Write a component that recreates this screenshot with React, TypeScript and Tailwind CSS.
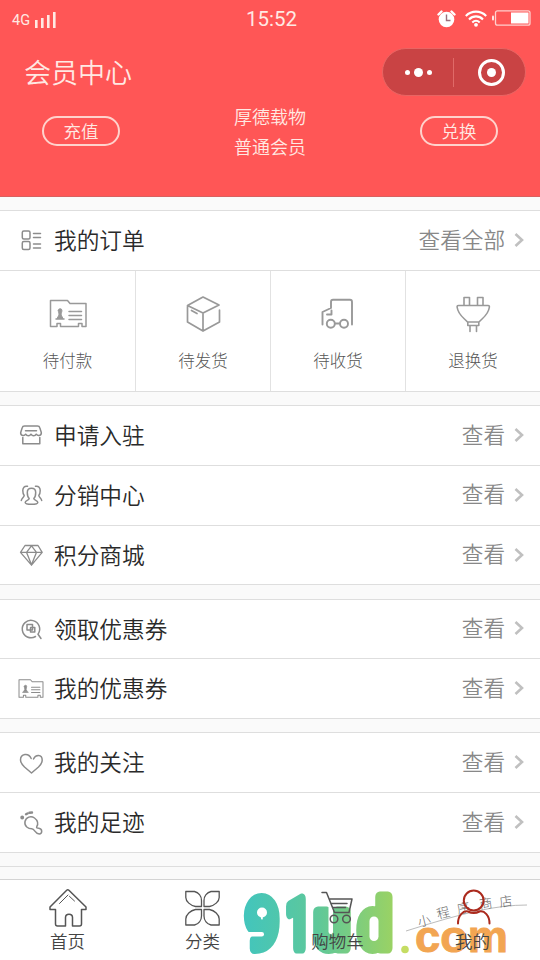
import type { ReactNode } from "react";

type RowItem = {
  icon: ReactNode;
  label: string;
};

function Svg({ className, box, children }: { className: string; box: string; children: ReactNode }) {
  return (
    <svg
      className={className}
      viewBox={box}
      fill="none"
      stroke="currentColor"
      strokeWidth="1.5"
      strokeLinecap="round"
      strokeLinejoin="round"
    >
      {children}
    </svg>
  );
}

const small = "w-[26px] h-[26px] text-[#8c8c8c]";
const large = "w-[40px] h-[40px] text-[#999]";

const OrderIcon = () => (
  <Svg className={small} box="0 0 26 26">
    <rect x="4.300" y="4" width="7.700" height="8" rx="1.500" />
    <rect x="4.300" y="14.500" width="7.700" height="8" rx="1.500" />
    <path d="M15.500 6.500h7M15.500 10.500h7M15.500 17h7M15.500 21h7" />
  </Svg>
);

const ShopIcon = () => (
  <Svg className={small} box="0 0 26 26">
    <path d="M6.500 4h13c1.500 0 2 .6 2.300 1.800l1.500 4.700c.4 3-3.300 4.200-5 1.700-1.300 2.200-4 2.200-5.300 0-1.300 2.200-4 2.200-5.300 0-1.700 2.500-5.400 1.300-5-1.700l1.500-4.700C4.500 4.600 5 4 6.500 4zM7.500 8.800h11M4.800 15.500v6.300h17v-6.300" />
  </Svg>
);

const PeopleIcon = () => (
  <Svg className={small} box="0 0 26 26">
    <path d="M11.200 16.500C9.500 15 9.300 13 9.300 10.500c0-2.500 1.700-4.200 4.200-4.200s4.200 1.700 4.200 4.200c0 2.500-.2 4.500-1.900 6 0 2 4 1.800 4 4 0 1.500-2.500 1.800-6.300 1.800s-6.300-.3-6.300-1.800c0-2.200 4-2 4-4z" />
    <path d="M9.500 4.300C6.200 3.700 4.800 6 4.800 8.500c0 2 .3 3.700 1.400 5C6 15.500 3.500 16 3.300 18.500M17.500 4.300c3.300-.6 4.700 1.700 4.700 4.200 0 2-.3 3.700-1.400 5 .2 2 2.700 2.500 2.900 5" />
  </Svg>
);

const DiamondIcon = () => (
  <Svg className={small} box="0 0 26 26">
    <path d="M7 3.500h13l4.200 6.800-10.700 12.900L2.500 10.300zM2.700 10.300H24M8.500 10.300l5 12.500 5-12.500-5-6.500z" strokeWidth="1.300" />
  </Svg>
);

const SearchIcon = () => (
  <Svg className={small} box="0 0 26 26">
    <path d="M17.500 20.500A8.700 8.700 0 1 1 20 18.200l3 4.300" />
    <path d="M9 8.500h5.500v5.500H9zM12.500 11.500h4.300V16h-4.300v-4" />
  </Svg>
);

const cardPaths = (
  <>
    <path d="M6.500 32.500h-4V6.500h17l2.500 3h16v23h-4v-3h-3.500v3h-18v-3H9v3H6" />
    <path d="M21 17.500h12.500M21 21.500h12.500M21 25.500h12.500M8 25h8" />
    <path d="M10.300 16.500a1.800 1.800 0 0 1 3.600 0c0 1.800-.8 2.500-.8 4.500l1.900 3.500H9l2-3.500c0-2-.7-2.700-.7-4.500z" fill="currentColor" strokeWidth="1" />
  </>
);

const CouponIcon = () => (
  <Svg className={small} box="1 1 38.500 38.500">{cardPaths}</Svg>
);

const HeartIcon = () => (
  <Svg className={small} box="0 0 26 26">
    <path d="M15.500 9C17.500 4.500 24.200 4 24.200 10.300c0 2.700-1.700 4.700-3.700 6.700l-7 6-7-6c-2-2-4-4-4-7C2.500 3.500 10.500 2.500 13.200 8.500" />
  </Svg>
);

const FootIcon = () => (
  <Svg className={small} box="0 0 26 26">
    <path d="M7 11.500c1-4.500 6-6 9.500-3.500 3.300 2.300 4 6 2.300 8.500-.7 1.500.4 1.800 2 1.800 4 .5 3.600 5.700.4 5.700-4.500 0-4-5-7.500-5.200C10.500 18.800 6 16.500 7 11.500z" />
    <path d="M8 4.300l1.500-.8M11.500 2.700l2.500-.2" strokeWidth="2.400" />
    <circle cx="4.200" cy="7.500" r="1.200" fill="currentColor" />
  </Svg>
);

const PayIcon = () => (
  <Svg className={large} box="0 0 40 40">{cardPaths}</Svg>
);

const BoxIcon = () => (
  <Svg className={large} box="0 0 40 40">
    <path d="M20 3l16 8L20 19 4.500 11.500zM4.500 11.500V28L20 37V19M36.500 16v12L20 37M8.500 16.500l5.500 3" strokeWidth="1.700" />
  </Svg>
);

const TruckIcon = () => (
  <Svg className={large} box="0 0 40 40">
    <path d="M4.500 30.500V18l8.500-4V8c0-1.500.5-2.300 2-2.300h17c1.500 0 2 .8 2 2.300v22.500M13.500 16.500v4H9M17 29.500h5" strokeWidth="1.900" />
    <circle cx="12.800" cy="29.700" r="4" strokeWidth="1.900" />
    <circle cx="26" cy="29.700" r="4" strokeWidth="1.900" />
  </Svg>
);

const PlugIcon = () => (
  <Svg className={large} box="0 0 40 40">
    <path d="M11 11V3.500h5.500V11M24.500 11V3.500H30V11M5.500 11.500H35c1.500 0 1.500.8 1.300 2C35.300 21 29.500 24 26 28H14.500C11 24 5.200 21 4.200 13.500c-.2-1.200-.2-2 1.300-2zM14.800 28v3.500h11V28M17 32v5.500M23.500 32v5.500" strokeWidth="1.600" />
  </Svg>
);

function Chevron() {
  return (
    <svg className="w-[10px] h-[14px] ml-[9px] mb-[1px]" viewBox="0 0 10 14" fill="none" stroke="#c0c0c0" strokeWidth="2.600">
      <path d="M1.500 1l6.500 6-6.500 6" />
    </svg>
  );
}

function Row({ icon, label, action = "查看" }: RowItem & { action?: string }) {
  return (
    <div className="flex h-[59.85px] items-center border-t border-[#dedede] pl-[18px] pr-[16px]">
      {icon}
      <span className="ml-[10px] text-[22.7px] leading-none text-[#2a2a2a]">{label}</span>
      <span className="mb-[4px] ml-auto text-[21.600px] leading-none text-[#888]">{action}</span>
      <Chevron />
    </div>
  );
}

function Section({ rows }: { rows: RowItem[] }) {
  return (
    <section className="mt-[13.100px] border-b border-[#dedede] bg-white">
      {rows.map((row) => (
        <Row key={row.label} {...row} />
      ))}
    </section>
  );
}

function StatusBar() {
  return (
    <div className="flex h-[38px] items-center pl-[12px] pr-[9px]">
      <div className="flex flex-1 items-center gap-[5px] pt-[2px]">
        <span className="pt-[3px] font-['Roboto'] text-[14.500px] leading-none">4G</span>
        <svg className="h-[16px] w-[22px]" viewBox="0 0 22 16" fill="currentColor">
          <rect x="0" y="8" width="2.600" height="8" />
          <rect x="6" y="6" width="2.600" height="10" />
          <rect x="12" y="3" width="2.600" height="13" />
          <rect x="18" y="0" width="2.600" height="16" />
        </svg>
      </div>
      <span className="pt-[1px] font-['Roboto'] text-[20.500px] leading-none">15:52</span>
      <div className="flex flex-1 items-center justify-end">
        <svg className="h-[18px] w-[19px]" viewBox="0 0 19 18">
          <circle cx="9.500" cy="9.500" r="7.800" fill="white" />
          <path d="M1.500 4.500l3-3M17.500 4.500l-3-3" stroke="white" strokeWidth="2.400" strokeLinecap="round" />
          <path d="M9.500 4.500v6h4" stroke="#9c6f7c" strokeWidth="1.400" fill="none" />
        </svg>
        <svg className="ml-[9px] mb-[2px] h-[17px] w-[22px]" viewBox="0 0 22 17" fill="none" stroke="white" strokeWidth="2.100">
          <path d="M.8 6C6.500.2 15.500.2 21.200 6M4 9.400c4-4 10-4 14 0M7.300 12.500c2.200-2.100 5.200-2.100 7.400 0" />
          <circle cx="11" cy="14.800" r="1.900" fill="white" stroke="none" />
        </svg>
        <svg className="ml-[5px] mb-[2px] h-[16px] w-[39px]" viewBox="0 0 39 16">
          <rect x="3.500" y=".8" width="34.500" height="14.400" rx="2" fill="none" stroke="#ffd0cd" strokeWidth="1.300" />
          <rect x="0" y="5.500" width="2" height="5" rx="1" fill="#ffe6e4" />
          <rect x="19" y="2.500" width="17.500" height="11" fill="white" />
        </svg>
      </div>
    </div>
  );
}

function Header() {
  return (
    <header className="h-[197px] border-b border-[#d9605f] bg-[#ff5656] font-normal text-[#ffe9e3]">
      <StatusBar />
      <div className="flex h-[68px] items-center justify-between pl-[24px] pr-[14px]">
        <h1 className="mb-[2px] text-[27px] font-[350] leading-none">会员中心</h1>
        <div className="flex h-[48px] w-[144px] items-center rounded-full border border-[#e96563] bg-[#c94344]">
          <div className="flex w-[70px] items-center justify-center gap-[4px]">
            <i className="size-[5px] rounded-full bg-white" />
            <i className="size-[9px] rounded-full bg-white" />
            <i className="size-[5px] rounded-full bg-white" />
          </div>
          <div className="h-[29px] w-px bg-[#e06a68]" />
          <div className="flex flex-1 justify-center pl-[4px]">
            <div className="flex size-[27px] items-center justify-center rounded-full border-[3px] border-white">
              <i className="size-[9px] rounded-full bg-white" />
            </div>
          </div>
        </div>
      </div>
      <div className="flex items-start justify-between px-[42px] font-[350]">
        <button className="mt-[10px] h-[30px] w-[78px] rounded-full border-2 border-[#ffd2cc] pb-[1px] text-[17.500px] leading-none">充值</button>
        <div className="-mt-[5px] text-center text-[18px] leading-[30px]">
          <p>厚德载物</p>
          <p>普通会员</p>
        </div>
        <button className="mt-[10px] h-[30px] w-[78px] rounded-full border-2 border-[#ffd2cc] pb-[1px] text-[17.500px] leading-none">兑换</button>
      </div>
    </header>
  );
}

const orders: RowItem[] = [
  { icon: <PayIcon />, label: "待付款" },
  { icon: <BoxIcon />, label: "待发货" },
  { icon: <TruckIcon />, label: "待收货" },
  { icon: <PlugIcon />, label: "退换货" },
];

const tabs: RowItem[] = [
  {
    label: "首页",
    icon: (
      <Svg className="h-[40px] w-[40px] text-[#555]" box="0 0 40 40">
        <path d="M18.700 3.300c.8-.8 1.400-.8 2.200 0L38 20v2.500h-4.500V37c0 1.500-.5 2-2 2h-7V30.500c0-4.500-7-4.500-7 0V39h-8c-1.500 0-2-.5-2-2V22.500H2V20z" />
        <path d="M11.500 16.500L20 8l6.500 6" strokeWidth="1" strokeDasharray="12 2 10 3" />
      </Svg>
    ),
  },
  {
    label: "分类",
    icon: (
      <Svg className="h-[40px] w-[40px] text-[#555]" box="0 0 40 40">
        <path d="M2.800 4.500h8.700c4 1 7 4.500 7 9v6h-6c-5-1-9.700-5-9.700-9zM36.200 4.500H28c-4 1-7 4.500-7 9v6h5.500c5-1 9.700-5 9.700-9zM2.800 38h8.700c4-1 7-4.500 7-9v-6.500h-6c-5 1-9.700 5-9.700 9.500zM36.200 38H28c-4-1-7-4.500-7-9v-6.500h5.500c5 1 9.700 5 9.700 9.500z" strokeWidth="1.300" />
      </Svg>
    ),
  },
  {
    label: "购物车",
    icon: (
      <Svg className="h-[40px] w-[40px] text-[#555]" box="0 0 40 40">
        <path d="M4 5.500h4.500l8 20h14.500l3-13.500H12M13 16.500h16M15 20.500h12.500" />
        <circle cx="16" cy="32" r="3.800" />
        <circle cx="28.500" cy="32" r="3.800" />
      </Svg>
    ),
  },
  {
    label: "我的",
    icon: (
      <Svg className="h-[40px] w-[40px] text-[#ab2a1d]" box="0 0 40 40">
        <circle cx="20.700" cy="13.500" r="9.900" strokeWidth="2" />
        <path d="M5 36.500c0-8 5-13 10-12 3.500 1.800 8 1.800 11.500 0 5-1 10 4 10 12" strokeWidth="2" />
      </Svg>
    ),
  },
];

// Site badge that floats over the tab bar
function Badge() {
  return (
    <svg className="pointer-events-none absolute left-[230px] top-[-1px] h-[81px] w-[310px]" viewBox="230 879 310 81">
      <defs>
        <linearGradient id="badge" gradientUnits="userSpaceOnUse" x1="243" y1="0" x2="393" y2="0">
          <stop offset="0" stopColor="#42c5bd" />
          <stop offset="0.500" stopColor="#5fc899" />
          <stop offset="1" stopColor="#9ad264" />
        </linearGradient>
      </defs>
      <g fill="url(#badge)" stroke="url(#badge)" strokeWidth="11" strokeLinejoin="round" fontFamily="Roboto" fontWeight="700" fontSize="68">
        <text x="246" y="947.500" textLength="32" lengthAdjust="spacingAndGlyphs">9</text>
        <text x="286" y="947.500" textLength="24" lengthAdjust="spacingAndGlyphs">1</text>
        <text x="315" y="947.500" textLength="34" lengthAdjust="spacingAndGlyphs">u</text>
        <text x="359" y="947.500" textLength="32" lengthAdjust="spacingAndGlyphs">d</text>
      </g>
      {/* counters of the chunky letters */}
      <g fill="white">
        <circle cx="262" cy="912.500" r="5" />
        <rect x="240" y="932" width="24" height="4.500" rx="2.200" />
        <rect x="328.500" y="904" width="4.500" height="30" rx="2.200" />
        <rect x="369.500" y="916.500" width="9" height="24.500" rx="4.500" />
      </g>
      <circle cx="405" cy="949.500" r="3.800" fill="#c5dd63" />
      <text x="415" y="952" fill="#f2a552" stroke="#f2a552" strokeWidth="1" fontFamily="Liberation Sans" fontWeight="700" fontSize="45" textLength="93" lengthAdjust="spacingAndGlyphs">com</text>
      <path d="M406 931Q450 917 477 911T527 905" stroke="#aaa" strokeWidth="0.800" fill="none" />
      <g fill="#666" fontFamily="Noto Sans CJK SC" fontWeight="300" fontSize="13">
        <text transform="translate(419 927) rotate(-14)">小</text>
        <text transform="translate(438 919) rotate(-14)">程</text>
        <text transform="translate(458 914) rotate(-12)">序</text>
        <text transform="translate(480 909) rotate(-8)">商</text>
        <text transform="translate(500 907) rotate(-8)">店</text>
      </g>
    </svg>
  );
}

function TabBar() {
  return (
    <nav className="relative mt-[11.500px] h-[82px] border-t border-[#d4d4d4] bg-white">
      <Badge />
      <div className="relative grid grid-cols-4">
        {tabs.map((tab) => (
          <div key={tab.label} className="flex flex-col items-center pt-[7px] text-[17.500px] text-[#444]">
            {tab.icon}
            <span className="mt-[5px] leading-none">{tab.label}</span>
          </div>
        ))}
      </div>
    </nav>
  );
}

function App() {
  return (
    <div className="h-[960px] w-[540px] overflow-hidden bg-[#fafafa] font-['Noto_Sans_CJK_SC',sans-serif] font-[350]">
      <Header />
      <section className="mt-[13px] border-b border-[#dedede] bg-white">
        <Row icon={<OrderIcon />} label="我的订单" action="查看全部" />
        <div className="grid h-[121px] grid-cols-4 border-t border-[#dedede]">
          {orders.map((item) => (
            <div
              key={item.label}
              className="flex flex-col items-center border-l border-[#e2e2e2] pt-[23px] text-[16.500px] font-light text-[#555] first:border-l-0"
            >
              {item.icon}
              <span className="mt-[18px] leading-none">{item.label}</span>
            </div>
          ))}
        </div>
      </section>
      <Section
        rows={[
          { icon: <ShopIcon />, label: "申请入驻" },
          { icon: <PeopleIcon />, label: "分销中心" },
          { icon: <DiamondIcon />, label: "积分商城" },
        ]}
      />
      <Section
        rows={[
          { icon: <SearchIcon />, label: "领取优惠券" },
          { icon: <CouponIcon />, label: "我的优惠券" },
        ]}
      />
      <Section
        rows={[
          { icon: <HeartIcon />, label: "我的关注" },
          { icon: <FootIcon />, label: "我的足迹" },
        ]}
      />
      <div className="mt-[13px] h-px bg-[#dedede]" />
      <TabBar />
    </div>
  );
}

export default App;
